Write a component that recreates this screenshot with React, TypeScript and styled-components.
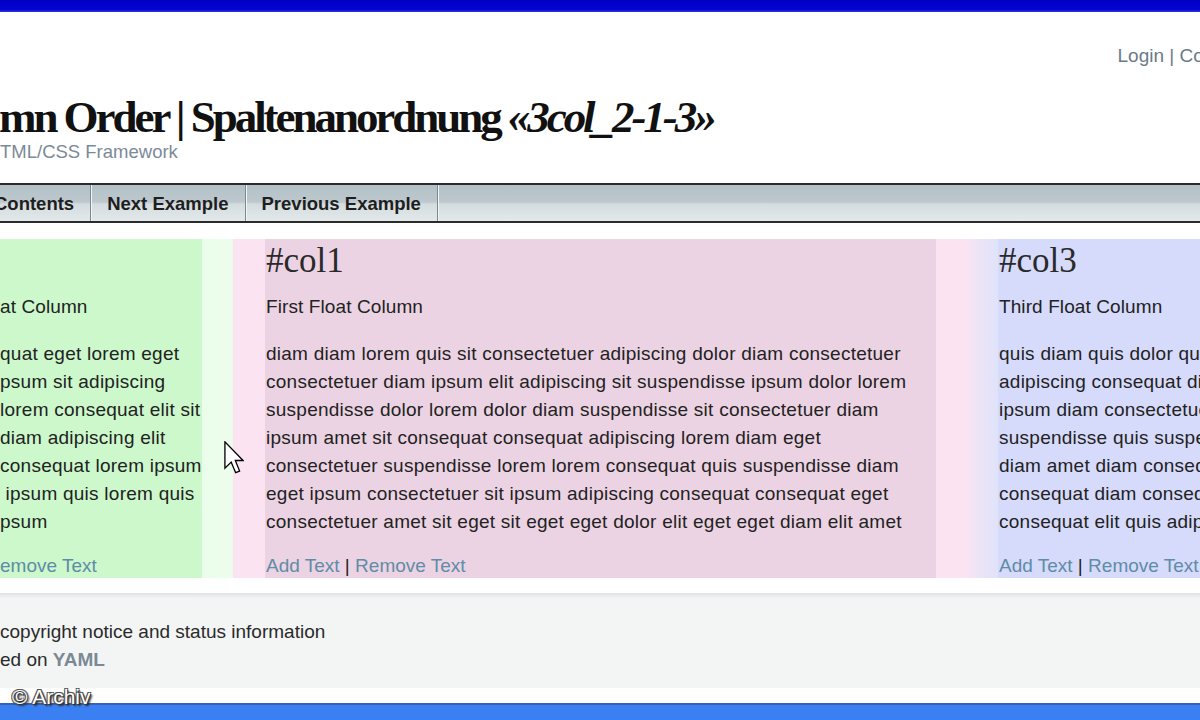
import React from "react";
import styled, { createGlobalStyle } from "styled-components";

const GlobalStyle = createGlobalStyle`
  html, body { margin: 0; padding: 0; background: #ffffff; }
  body { font-family: "Liberation Sans", Arial, sans-serif; overflow: hidden; }
`;

const Page = styled.div`
  position: relative;
  width: 1200px;
  height: 720px;
  overflow: hidden;
  display: flex;
  flex-direction: column;
  background: #ffffff;
`;

const TopBar = styled.div`
  flex: none;
  height: 12px;
  background: linear-gradient(to bottom, #0000c2, #0404d6 80%, #3a3ae0);
`;

const Header = styled.header`
  flex: none;
  height: 171px;
  display: flex;
  flex-direction: column;
  overflow: hidden;
`;

const TopLinks = styled.div`
  display: flex;
  justify-content: flex-end;
  padding-top: 32px;
  margin-right: -45px;
  font-size: 19px;
  line-height: 24px;
  color: #6b7a88;
  white-space: nowrap;
`;

const Title = styled.h1`
  margin: 25px 0 0 -1px;
  font-family: "Liberation Serif", "Times New Roman", serif;
  font-weight: bold;
  font-size: 45px;
  line-height: 48px;
  letter-spacing: -3.05px;
  color: #111111;
  white-space: nowrap;
`;

const Italic = styled.em`
  font-style: italic;
`;

const Subtitle = styled.div`
  font-size: 18.5px;
  line-height: 22px;
  color: #7b8a98;
  white-space: nowrap;
`;

const Nav = styled.nav`
  flex: none;
  height: 40px;
  box-sizing: border-box;
  border-top: 2px solid #2b2b2b;
  border-bottom: 2px solid #2b2b2b;
  background: linear-gradient(
    to bottom,
    #b3c1c7 0%,
    #bcc8cd 47%,
    #d4dcdf 53%,
    #e3e9ea 100%
  );
  display: flex;
`;

const Tab = styled.div<{ $first?: boolean }>`
  display: flex;
  align-items: center;
  padding: 2px 16px 0 ${(p) => (p.$first ? "0" : "16px")};
  margin-left: ${(p) => (p.$first ? "-6px" : "0")};
  font-weight: bold;
  font-size: 18.5px;
  color: #1e1e1e;
  white-space: nowrap;
  border-right: 1px solid #7f888d;
  box-shadow: 1px 0 0 #f2f5f5;
`;

const Gap = styled.div<{ $h: number }>`
  flex: none;
  height: ${(p) => p.$h}px;
`;

const Columns = styled.div`
  flex: none;
  height: 339px;
  display: flex;
`;

const Col2 = styled.div`
  flex: none;
  width: 233px;
  display: flex;
  background: linear-gradient(to right, #d6f9d6, #edfded);
`;

const Col1 = styled.div`
  flex: none;
  width: 735px;
  box-sizing: border-box;
  padding: 0 32px;
  display: flex;
  background: #fce3f1;
`;

const Col3 = styled.div`
  flex: 1;
  padding-left: 30px;
  display: flex;
  background: linear-gradient(to right, #f6e4f5, #dfe3fa 30px);
`;

const Content = styled.div<{ $bg: string; $w?: number; $pad?: number }>`
  flex: ${(p) => (p.$w ? "none" : "1")};
  width: ${(p) => (p.$w ? `${p.$w}px` : "auto")};
  box-sizing: border-box;
  padding: 2px 0 0 ${(p) => p.$pad ?? 1}px;
  background: ${(p) => p.$bg};
  overflow: hidden;
  white-space: nowrap;
  color: #222222;
`;

const Heading = styled.h2`
  margin: 0 0 12px;
  height: 40px;
  font-family: "Liberation Serif", "Times New Roman", serif;
  font-weight: normal;
  font-size: 35px;
  line-height: 40px;
  color: #2a2a2a;
`;

const Sub = styled.p`
  margin: 0 0 19px;
  font-size: 19px;
  line-height: 28px;
  letter-spacing: 0.1px;
`;

const Para = styled.p`
  margin: 0 0 18px;
  font-size: 19px;
  line-height: 28px;
  letter-spacing: 0.25px;
`;

const Links = styled.div`
  font-size: 19px;
  line-height: 24px;
  color: #222222;
`;

const Link = styled.a`
  color: #5f8ca6;
  text-decoration: none;
`;

const Footer = styled.footer`
  flex: none;
  height: 95px;
  box-sizing: border-box;
  padding-top: 25px;
  background: #f3f5f5;
  box-shadow: inset 0 5px 3px -2px #e1e5e5;
  font-size: 19px;
  line-height: 28px;
  color: #2a2a2a;
  white-space: nowrap;
`;

const Strong = styled.b`
  color: #7a8994;
`;

const BottomBar = styled.div`
  flex: none;
  height: 17px;
  box-sizing: border-box;
  border-top: 2px solid #3263b8;
  background: #3b80f3;
`;

const Cursor = styled.svg`
  position: absolute;
  left: 224px;
  top: 441px;
`;

const Watermark = styled.div`
  position: absolute;
  left: 12px;
  top: 684px;
  font-size: 21px;
  line-height: 26px;
  color: #ffffff;
  text-shadow: 1px 1px 0 #333, -1px -1px 0 #555, 1px -1px 0 #555, -1px 1px 0 #555,
    2px 2px 2px #222;
  white-space: nowrap;
`;

const col2Lines = [
  "quat eget lorem eget",
  "psum sit adipiscing",
  "lorem consequat elit sit",
  "diam adipiscing elit",
  "consequat lorem ipsum",
  "\u00a0ipsum quis lorem quis",
  "psum",
];

const col1Lines = [
  "diam diam lorem quis sit consectetuer adipiscing dolor diam consectetuer",
  "consectetuer diam ipsum elit adipiscing sit suspendisse ipsum dolor lorem",
  "suspendisse dolor lorem dolor diam suspendisse sit consectetuer diam",
  "ipsum amet sit consequat consequat adipiscing lorem diam eget",
  "consectetuer suspendisse lorem lorem consequat quis suspendisse diam",
  "eget ipsum consectetuer sit ipsum adipiscing consequat consequat eget",
  "consectetuer amet sit eget sit eget eget dolor elit eget eget diam elit amet",
];

const col3Lines = [
  "quis diam quis dolor quis",
  "adipiscing consequat diam",
  "ipsum diam consectetuer",
  "suspendisse quis suspendisse",
  "diam amet diam consequat",
  "consequat diam consequat",
  "consequat elit quis adipiscing",
];

const Lines: React.FC<{ lines: string[] }> = ({ lines }) => (
  <Para>
    {lines.map((l, i) => (
      <React.Fragment key={i}>
        {l}
        {i < lines.length - 1 && <br />}
      </React.Fragment>
    ))}
  </Para>
);

export default function App() {
  return (
    <>
      <GlobalStyle />
      <Page>
        <TopBar />
        <Header>
          <TopLinks>Login | Contact</TopLinks>
          <Title>
            mn Order | Spaltenanordnung <Italic>«3col_2-1-3»</Italic>
          </Title>
          <Subtitle>TML/CSS Framework</Subtitle>
        </Header>
        <Nav>
          <Tab $first>Contents</Tab>
          <Tab>Next Example</Tab>
          <Tab>Previous Example</Tab>
        </Nav>
        <Gap $h={16} />
        <Columns>
          <Col2>
            <Content $bg="#ccf8cc" $w={202} $pad={0}>
              <Heading>&nbsp;</Heading>
              <Sub>at Column</Sub>
              <Lines lines={col2Lines} />
              <Links>
                <Link href="#">emove Text</Link>
              </Links>
            </Content>
          </Col2>
          <Col1>
            <Content $bg="#ecd3e3">
              <Heading>#col1</Heading>
              <Sub>First Float Column</Sub>
              <Lines lines={col1Lines} />
              <Links>
                <Link href="#">Add Text</Link> | <Link href="#">Remove Text</Link>
              </Links>
            </Content>
          </Col1>
          <Col3>
            <Content $bg="#d6dafb">
              <Heading>#col3</Heading>
              <Sub>Third Float Column</Sub>
              <Lines lines={col3Lines} />
              <Links>
                <Link href="#">Add Text</Link> | <Link href="#">Remove Text</Link>
              </Links>
            </Content>
          </Col3>
        </Columns>
        <Gap $h={15} />
        <Footer>
          copyright notice and status information
          <br />
          ed on <Strong>YAML</Strong>
        </Footer>
        <Gap $h={15} />
        <BottomBar />
        <Cursor width="20" height="33" viewBox="0 0 12 20">
          <path
            d="M0.5 0.5 L0.5 16.5 L4.3 12.8 L7 19.2 L9.4 18.2 L6.8 11.8 L11.5 11.8 Z"
            fill="#ffffff"
            stroke="#000000"
            strokeWidth="0.8"
            strokeLinejoin="miter"
          />
        </Cursor>
        <Watermark>© Archiv</Watermark>
      </Page>
    </>
  );
}
